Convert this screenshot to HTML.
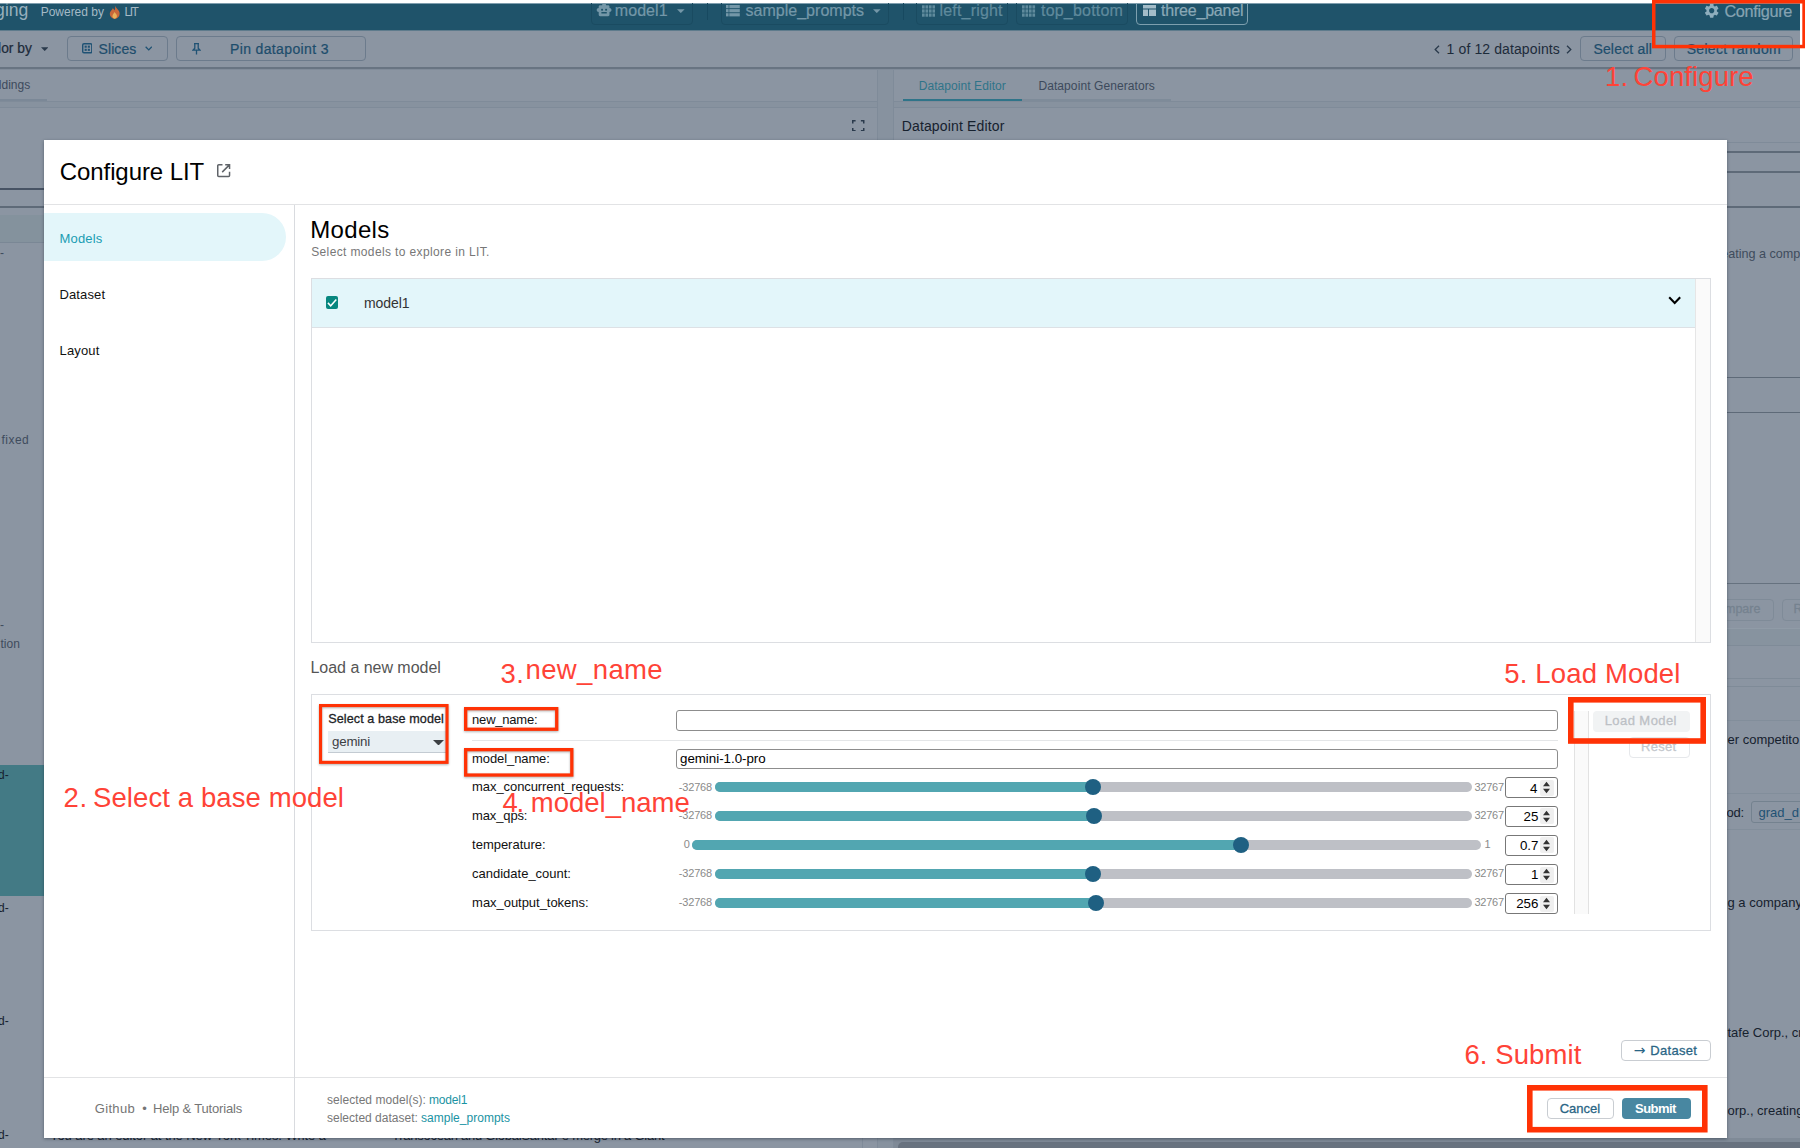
<!DOCTYPE html>
<html lang="en"><head><meta charset="utf-8"><title>Configure LIT</title>
<style>
html,body{margin:0;padding:0;background:#fff;}
body{width:1805px;height:1148px;overflow:hidden;position:relative;font-family:"Liberation Sans",sans-serif;}
#app{position:absolute;left:0;top:0;width:1800px;height:1148px;overflow:hidden;background:#8b95a2;}
#ann{position:absolute;left:0;top:0;width:1805px;height:1148px;overflow:hidden;}
.a{position:absolute;}
.t{position:absolute;white-space:pre;line-height:1;}
</style></head>
<body>
<div id="app">
<!-- background page (dimmed) -->
<div class="a" style="left:0.0px;top:3.0px;width:1800.0px;height:27.0px;background:#1f536a;"></div>
<div class="a" style="left:0.0px;top:3.0px;width:1800.0px;height:1.0px;background:#7f9eae;"></div>
<div class="a" style="left:0.0px;top:30.0px;width:1800.0px;height:1.0px;background:#5e7b8c;"></div>
<div class="a" style="left:591.0px;top:-4.0px;width:102.0px;height:29.3px;border:1px solid #1a4b61;border-radius:4px;box-sizing:border-box;"></div>
<div class="a" style="left:720.5px;top:-4.0px;width:168.5px;height:29.3px;border:1px solid #1a4b61;border-radius:4px;box-sizing:border-box;"></div>
<div class="a" style="left:916.3px;top:-4.0px;width:91.7px;height:29.3px;border:1px solid #1a4b61;border-radius:4px;box-sizing:border-box;"></div>
<div class="a" style="left:1016.0px;top:-4.0px;width:111.5px;height:29.3px;border:1px solid #1a4b61;border-radius:4px;box-sizing:border-box;"></div>
<div class="a" style="left:1136.0px;top:-4.0px;width:111.5px;height:29.3px;border:1px solid #7d9fae;border-radius:4px;box-sizing:border-box;"></div>
<div class="a" style="left:706.5px;top:3.0px;width:1.5px;height:17.0px;background:#174960;"></div>
<div class="a" style="left:902.5px;top:3.0px;width:1.5px;height:17.0px;background:#174960;"></div>
<svg class="a" style="left:595.6px;top:1.6px;" width="16.2" height="16.2" viewBox="0 0 24 24"><path fill="#7497a8" d="M20 9V7c0-1.1-.9-2-2-2h-3c0-1.66-1.34-3-3-3S9 3.340 9 5H6c-1.100 0-2 .9-2 2v2c-1.660 0-3 1.340-3 3s1.340 3 3 3v4c0 1.100.9 2 2 2h12c1.100 0 2-.9 2-2v-4c1.660 0 3-1.340 3-3s-1.340-3-3-3zM7.500 11.500c0-.83.67-1.500 1.500-1.500s1.500.67 1.500 1.500S9.830 13 9 13s-1.500-.67-1.500-1.500zM16 17H8v-2h8v2zm-1-4c-.83 0-1.500-.67-1.500-1.500S14.170 10 15 10s1.500.67 1.500 1.500S15.830 13 15 13z"/></svg>
<svg class="a" style="left:677.3px;top:8.5px;" width="7.6" height="4.4" viewBox="0 0 10 5"><path fill="#7497a8" d="M0 0h10L5 5z"/></svg>
<svg class="a" style="left:873.0px;top:8.5px;" width="7.6" height="4.4" viewBox="0 0 10 5"><path fill="#7497a8" d="M0 0h10L5 5z"/></svg>
<svg class="a" style="left:726.0px;top:5.2px;" width="13.8" height="11.4" viewBox="0 0 13.8 11.4"><g fill="#7497a8"><rect x="0" y="0" width="2.600" height="3.200"/><rect x="3.300" y="0" width="10.500" height="3.200"/><rect x="0" y="4.100" width="2.600" height="3.200"/><rect x="3.300" y="4.100" width="10.500" height="3.200"/><rect x="0" y="8.200" width="2.600" height="3.200"/><rect x="3.300" y="8.200" width="10.500" height="3.200"/></g></svg>
<svg class="a" style="left:921.6px;top:4.5px;" width="13.5" height="12" viewBox="0 0 13.2 11.2"><g fill="#5f8a9c"><rect x="0.0" y="0.0" width="2.6" height="3.2"/><rect x="0.0" y="4.0" width="2.6" height="3.2"/><rect x="0.0" y="8.0" width="2.6" height="3.2"/><rect x="3.4" y="0.0" width="2.6" height="3.2"/><rect x="3.4" y="4.0" width="2.6" height="3.2"/><rect x="3.4" y="8.0" width="2.6" height="3.2"/><rect x="6.8" y="0.0" width="2.6" height="3.2"/><rect x="6.8" y="4.0" width="2.6" height="3.2"/><rect x="6.8" y="8.0" width="2.6" height="3.2"/><rect x="10.2" y="0.0" width="2.6" height="3.2"/><rect x="10.2" y="4.0" width="2.6" height="3.2"/><rect x="10.2" y="8.0" width="2.6" height="3.2"/></g></svg>
<svg class="a" style="left:1022.0px;top:4.5px;" width="13.5" height="12" viewBox="0 0 13.2 11.2"><g fill="#5f8a9c"><rect x="0.0" y="0.0" width="2.6" height="3.2"/><rect x="0.0" y="4.0" width="2.6" height="3.2"/><rect x="0.0" y="8.0" width="2.6" height="3.2"/><rect x="3.4" y="0.0" width="2.6" height="3.2"/><rect x="3.4" y="4.0" width="2.6" height="3.2"/><rect x="3.4" y="8.0" width="2.6" height="3.2"/><rect x="6.8" y="0.0" width="2.6" height="3.2"/><rect x="6.8" y="4.0" width="2.6" height="3.2"/><rect x="6.8" y="8.0" width="2.6" height="3.2"/><rect x="10.2" y="0.0" width="2.6" height="3.2"/><rect x="10.2" y="4.0" width="2.6" height="3.2"/><rect x="10.2" y="8.0" width="2.6" height="3.2"/></g></svg>
<svg class="a" style="left:1142.6px;top:5.0px;" width="13" height="11" viewBox="0 0 13 11"><g fill="#a3bcc8"><rect x="0" y="0" width="13" height="3.5"/><rect x="0" y="4.5" width="5" height="6.500"/><rect x="6" y="4.5" width="7" height="6.500"/></g></svg>
<svg class="a" style="left:1703.1px;top:1.8px;" width="17.4" height="17.4" viewBox="0 0 24 24"><path fill="#8eaebd" d="M19.140 12.940c.04-.3.06-.61.06-.94 0-.32-.02-.64-.07-.94l2.030-1.580c.18-.14.23-.41.12-.61l-1.920-3.320c-.12-.22-.37-.29-.59-.22l-2.390.96c-.5-.38-1.030-.7-1.620-.94l-.36-2.540c-.04-.24-.24-.41-.48-.41h-3.840c-.24 0-.43.17-.47.41l-.36 2.540c-.59.24-1.130.57-1.620.94l-2.390-.96c-.22-.08-.47 0-.59.22L2.740 8.870c-.12.21-.08.47.12.61l2.030 1.580c-.05.3-.09.63-.09.94s.02.64.07.94l-2.030 1.580c-.18.14-.23.41-.12.61l1.920 3.320c.12.22.37.29.59.22l2.390-.96c.5.38 1.030.7 1.620.94l.36 2.540c.05.24.24.41.48.41h3.840c.24 0 .44-.17.47-.41l.36-2.540c.59-.24 1.130-.56 1.620-.94l2.390.96c.22.08.47 0 .59-.22l1.920-3.320c.12-.22.07-.47-.12-.61l-2.010-1.580zM12 15.600c-1.980 0-3.600-1.620-3.600-3.600s1.620-3.600 3.600-3.600 3.600 1.620 3.600 3.600-1.620 3.600-3.600 3.600z"/></svg>
<svg class="a" style="left:109.0px;top:4.5px;" width="11.5" height="14" viewBox="0 0 12 15"><path fill="#c9683a" d="M6 0c.5 2.500 3 4 4.500 6.500 1.700 3 .5 7.500-4.500 8.500-5-1-6.200-5-4.700-7.800C2.200 5.600 3.500 5 3.800 3.500 5 4.300 5.500 5.200 5.600 6 6.800 4.300 6.600 2 6 0z"/><path fill="#e9b15a" d="M6 14.600c-2.200-.5-3-2.400-2.200-4 .5-1 1.500-1.600 2-3 .9 1.400 2.200 2.300 2.500 3.800.3 1.700-.8 2.800-2.300 3.200z"/></svg>
<div class="a" style="left:0.0px;top:66.6px;width:1800.0px;height:1.0px;background:#7d8997;"></div>
<div class="a" style="left:0.0px;top:67.4px;width:1800.0px;height:1.6px;background:#687482;"></div>
<div class="a" style="left:0.0px;top:69.0px;width:1800.0px;height:1.0px;background:#818c9a;"></div>
<div class="a" style="left:67.0px;top:35.8px;width:100.8px;height:25.7px;border:1px solid #6c7b8c;border-radius:4px;box-sizing:border-box;"></div>
<div class="a" style="left:176.0px;top:35.8px;width:189.7px;height:25.7px;border:1px solid #6c7b8c;border-radius:4px;box-sizing:border-box;"></div>
<div class="a" style="left:1580.0px;top:35.8px;width:86.0px;height:25.7px;border:1px solid #6c7b8c;border-radius:4px;box-sizing:border-box;"></div>
<div class="a" style="left:1674.0px;top:35.8px;width:118.6px;height:25.7px;border:1px solid #6c7b8c;border-radius:4px;box-sizing:border-box;"></div>
<svg class="a" style="left:41.1px;top:46.5px;" width="7.4" height="4.4" viewBox="0 0 10 5"><path fill="#2a3a4c" d="M0 0h10L5 5z"/></svg>
<svg class="a" style="left:81.8px;top:43.0px;" width="10.5" height="10.5" viewBox="0 0 12 12"><rect x="0.800" y="0.800" width="10.400" height="10.400" rx="1.500" fill="none" stroke="#1f5274" stroke-width="1.600"/><g fill="#1f5274"><rect x="3" y="3" width="2.400" height="2.400"/><rect x="6.600" y="3" width="2.400" height="2.400"/><rect x="3" y="6.600" width="2.400" height="2.400"/><rect x="6.600" y="6.600" width="2.400" height="2.400"/></g></svg>
<svg class="a" style="left:144.5px;top:46.3px;" width="7.5" height="5" viewBox="0 0 8 5"><path fill="none" stroke="#1f5274" stroke-width="1.400" d="M.7.7 4 4 7.300.7"/></svg>
<svg class="a" style="left:191.5px;top:42.5px;" width="9" height="12" viewBox="0 0 9 12"><path fill="none" stroke="#1f5274" stroke-width="1.300" d="M2 .7h5M2.800.7v4.500L1 7.200h7L6.200 5.200V.7M4.500 7.200V11.500"/></svg>
<svg class="a" style="left:1433.5px;top:44.5px;" width="6" height="9" viewBox="0 0 6 9"><path fill="none" stroke="#2a3a4c" stroke-width="1.300" d="M5 .7 1.200 4.500 5 8.300"/></svg>
<svg class="a" style="left:1565.5px;top:44.5px;" width="6" height="9" viewBox="0 0 6 9"><path fill="none" stroke="#2a3a4c" stroke-width="1.300" d="M1 .7 4.800 4.500 1 8.300"/></svg>
<div class="a" style="left:0.0px;top:100.8px;width:1800.0px;height:7.5px;background:#87929f;border-top:1px solid #7f8b99;border-bottom:1px solid #7f8b99;box-sizing:border-box;"></div>
<div class="a" style="left:877.0px;top:69.5px;width:17.0px;height:1078.5px;background:#87929f;border-left:1px solid #7f8b99;border-right:1px solid #7f8b99;box-sizing:border-box;"></div>
<div class="a" style="left:0.0px;top:98.6px;width:47.0px;height:2.0px;background:#7b8897;"></div>
<div class="a" style="left:903.0px;top:98.5px;width:119.0px;height:2.2px;background:#2f7489;"></div>
<div class="a" style="left:1022.0px;top:98.5px;width:149.0px;height:2.2px;background:#7e8b99;"></div>
<svg class="a" style="left:852.0px;top:119.8px;" width="12.5" height="11.6" viewBox="0 0 12.5 11.6"><path fill="none" stroke="#2a3a4c" stroke-width="1.500" d="M.75 3.600V.75H3.600M8.900.75h2.850V3.600M11.750 8v2.850H8.900M3.600 10.850H.75V8"/></svg>
<div class="a" style="left:0.0px;top:188.0px;width:877.0px;height:2.0px;background:#475364;"></div>
<div class="a" style="left:0.0px;top:206.2px;width:877.0px;height:1.8px;background:#5e6a78;"></div>
<div class="a" style="left:0.0px;top:215.0px;width:877.0px;height:27.6px;background:#84929d;border-bottom:1px solid #7a8795;box-sizing:border-box;"></div>
<div class="a" style="left:0.0px;top:765.0px;width:877.0px;height:131.4px;background:#437a85;"></div>
<div class="a" style="left:894.0px;top:142.0px;width:906.0px;height:1.0px;background:#7f8b99;"></div>
<div class="a" style="left:894.0px;top:151.4px;width:906.0px;height:1.7px;background:#5e6a78;"></div>
<div class="a" style="left:894.0px;top:171.0px;width:906.0px;height:1.7px;background:#5e6a78;"></div>
<div class="a" style="left:894.0px;top:206.0px;width:906.0px;height:1.7px;background:#5e6a78;"></div>
<div class="a" style="left:894.0px;top:376.6px;width:906.0px;height:1.7px;background:#5e6a78;"></div>
<div class="a" style="left:894.0px;top:411.8px;width:906.0px;height:1.7px;background:#5e6a78;"></div>
<div class="a" style="left:894.0px;top:582.8px;width:906.0px;height:1.6px;background:#66727f;"></div>
<div class="a" style="left:1690.0px;top:599.0px;width:83.7px;height:21.6px;border:1px solid #7f8b98;border-radius:4px;box-sizing:border-box;"></div>
<div class="a" style="left:1782.0px;top:599.0px;width:78.0px;height:21.6px;border:1px solid #7f8b98;border-radius:4px;box-sizing:border-box;"></div>
<div class="a" style="left:894.0px;top:628.0px;width:906.0px;height:18.0px;background:#87939f;border-top:1px solid #909ba7;border-bottom:1px solid #7f8b98;box-sizing:border-box;"></div>
<div class="a" style="left:894.0px;top:678.2px;width:906.0px;height:1.0px;background:#7f8b98;"></div>
<div class="a" style="left:894.0px;top:685.6px;width:906.0px;height:1.0px;background:#7f8b98;"></div>
<div class="a" style="left:894.0px;top:719.6px;width:906.0px;height:1.0px;background:#828e9b;"></div>
<div class="a" style="left:894.0px;top:793.2px;width:906.0px;height:1.0px;background:#828e9b;"></div>
<div class="a" style="left:894.0px;top:828.6px;width:906.0px;height:1.0px;background:#828e9b;"></div>
<div class="a" style="left:1751.0px;top:801.0px;width:79.0px;height:21.7px;border:1px solid #74828f;border-radius:3px;box-sizing:border-box;"></div>
<div class="a" style="left:862.0px;top:1120.0px;width:1.0px;height:28.0px;background:#7f8b99;"></div>
<div class="a" style="left:894.0px;top:1138.0px;width:906.0px;height:10.0px;background:#7f8a97;"></div>
<div class="a" style="left:898.0px;top:1142.0px;width:912.0px;height:14.0px;background:#68727f;border-radius:5px;"></div>
<span class="t" style="left:-4.9px;top:2.1px;font-size:17.6px;color:#98b0bd;">ging</span>
<span class="t" style="left:40.7px;top:6.4px;font-size:12px;color:#a5bac6;letter-spacing:-0.02px;">Powered by</span>
<span class="t" style="left:124.6px;top:6.4px;font-size:12px;color:#a5bac6;letter-spacing:-1.50px;">LIT</span>
<span class="t" style="left:614.8px;top:3.3px;font-size:16px;color:#7497a8;letter-spacing:0.06px;-webkit-text-stroke:0.22px;">model1</span>
<span class="t" style="left:745.5px;top:3.3px;font-size:16px;color:#7497a8;letter-spacing:0.02px;-webkit-text-stroke:0.22px;">sample_prompts</span>
<span class="t" style="left:939.5px;top:3.3px;font-size:16px;color:#5f8a9c;letter-spacing:0.18px;-webkit-text-stroke:0.22px;">left_right</span>
<span class="t" style="left:1041.0px;top:3.3px;font-size:16px;color:#5f8a9c;letter-spacing:0.21px;-webkit-text-stroke:0.22px;">top_bottom</span>
<span class="t" style="left:1161.0px;top:3.3px;font-size:16px;color:#8aa8b6;letter-spacing:-0.20px;-webkit-text-stroke:0.22px;">three_panel</span>
<span class="t" style="left:1724.4px;top:3.1px;font-size:16.3px;color:#86a3b2;letter-spacing:-0.33px;-webkit-text-stroke:0.22px;">Configure</span>
<span class="t" style="left:-1.9px;top:41.7px;font-size:13.8px;color:#1d2b3a;-webkit-text-stroke:0.22px;">lor by</span>
<span class="t" style="left:98.6px;top:42.0px;font-size:14px;color:#1d4d6c;letter-spacing:0.07px;-webkit-text-stroke:0.22px;">Slices</span>
<span class="t" style="left:230.0px;top:42.0px;font-size:14px;color:#1d4d6c;letter-spacing:0.36px;-webkit-text-stroke:0.22px;">Pin datapoint 3</span>
<span class="t" style="left:1446.6px;top:41.7px;font-size:14px;color:#1d2b3a;letter-spacing:0.11px;">1 of 12 datapoints</span>
<span class="t" style="left:1593.4px;top:42.0px;font-size:14px;color:#1d4d6c;letter-spacing:0.18px;-webkit-text-stroke:0.22px;">Select all</span>
<span class="t" style="left:1686.7px;top:42.0px;font-size:14px;color:#1d4d6c;letter-spacing:0.31px;-webkit-text-stroke:0.22px;">Select random</span>
<span class="t" style="left:-1.2px;top:79.4px;font-size:12px;color:#3d4a5c;">ldings</span>
<span class="t" style="left:918.7px;top:79.9px;font-size:12px;color:#2f7489;letter-spacing:0.07px;">Datapoint Editor</span>
<span class="t" style="left:1038.4px;top:79.9px;font-size:12px;color:#3d4a5c;letter-spacing:0.09px;">Datapoint Generators</span>
<span class="t" style="left:901.7px;top:118.7px;font-size:14px;color:#16212e;letter-spacing:0.15px;">Datapoint Editor</span>
<span class="t" style="left:1.5px;top:434.1px;font-size:12px;color:#3f4c5d;letter-spacing:0.46px;">fixed</span>
<span class="t" style="left:0.0px;top:247.3px;font-size:12px;color:#3f4c5d;">-</span>
<span class="t" style="left:0.0px;top:619.3px;font-size:12px;color:#3f4c5d;">-</span>
<span class="t" style="left:0.5px;top:637.6px;font-size:12px;color:#3f4c5d;">tion</span>
<span class="t" style="left:-2.0px;top:769.3px;font-size:12px;color:#16212e;">d-</span>
<span class="t" style="left:-2.0px;top:902.3px;font-size:12px;color:#16212e;">d-</span>
<span class="t" style="left:-2.0px;top:1015.3px;font-size:12px;color:#16212e;">d-</span>
<span class="t" style="left:-2.0px;top:1129.1px;font-size:12px;color:#16212e;">d-</span>
<span class="t" style="left:1721.2px;top:247.7px;font-size:12.6px;color:#3f4c5d;">eating a comp</span>
<span class="t" style="left:1727.6px;top:732.6px;font-size:13px;color:#16212e;">er competito</span>
<span class="t" style="left:1726.5px;top:806.3px;font-size:13px;color:#16212e;letter-spacing:-0.23px;">od:</span>
<span class="t" style="left:1758.5px;top:806.3px;font-size:13px;color:#1f5274;">grad_d</span>
<span class="t" style="left:1727.5px;top:895.5px;font-size:13px;color:#16212e;">g a company</span>
<span class="t" style="left:1727.5px;top:1025.6px;font-size:13px;color:#16212e;">tafe Corp., cr</span>
<span class="t" style="left:1727.5px;top:1103.6px;font-size:13px;color:#16212e;">orp., creating</span>
<span class="t" style="left:1725.0px;top:603.4px;font-size:12.5px;color:#75828f;-webkit-text-stroke:0.28px;">mpare</span>
<span class="t" style="left:1793.5px;top:603.4px;font-size:12.5px;color:#75828f;-webkit-text-stroke:0.28px;">R</span>
<span class="t" style="left:50.0px;top:1128.9px;font-size:13px;color:#16212e;letter-spacing:-0.08px;">You are an editor at the New York Times. Write a</span>
<span class="t" style="left:392.0px;top:1128.9px;font-size:13px;color:#16212e;letter-spacing:-0.25px;">Transocean and GlobalSantaFe merge in a Giant</span>
<!-- dialog -->
<div class="a" style="left:44.2px;top:140.4px;width:1682.8px;height:997.9px;background:#fff;box-shadow:0 1px 3px rgba(20,30,45,.45);"></div>
<div class="a" style="left:44.2px;top:204.3px;width:1682.8px;height:1.0px;background:#e2e3e5;"></div>
<div class="a" style="left:44.2px;top:1077.4px;width:1682.8px;height:1.0px;background:#e2e3e5;"></div>
<div class="a" style="left:293.8px;top:205.0px;width:1.0px;height:933.3px;background:#d9dbdf;"></div>
<div class="a" style="left:44.2px;top:213.4px;width:241.8px;height:47.9px;background:#e3f6fa;border-radius:0 24px 24px 0;"></div>
<svg class="a" style="left:215.7px;top:163.0px;" width="15.3" height="15.3" viewBox="0 0 15.3 15.3"><path fill="none" stroke="#5f6368" stroke-width="1.500" d="M6.500 1.750H2.750a1 1 0 0 0-1 1v9.800a1 1 0 0 0 1 1h9.800a1 1 0 0 0 1-1V8.800M9.200 1.750h4.350V6.100M13.400 1.900 6.200 9.100"/></svg>
<div class="a" style="left:311.3px;top:277.7px;width:1399.3px;height:365.3px;border:1px solid #dcdee2;box-sizing:border-box;"></div>
<div class="a" style="left:1695.3px;top:278.7px;width:14.3px;height:363.3px;background:#fafafa;border-left:1px solid #e6e6e6;box-sizing:border-box;"></div>
<div class="a" style="left:312.3px;top:278.7px;width:1383.0px;height:49.5px;background:#e3f6fa;border-bottom:1px solid #dde1e5;box-sizing:border-box;"></div>
<div class="a" style="left:325.7px;top:296.0px;width:12.6px;height:12.9px;background:#07877f;border-radius:2px;"></div>
<svg class="a" style="left:325.7px;top:296.0px;" width="12.6" height="12.9" viewBox="0 0 12.6 12.9"><path fill="none" stroke="#fff" stroke-width="1.500" d="M1.900 6.900 4.700 9.800 10.300 3.600"/></svg>
<svg class="a" style="left:1668.0px;top:296.0px;" width="13.4" height="9.5" viewBox="0 0 13.4 9.5"><path fill="none" stroke="#000" stroke-width="2.100" d="M1.200 1.300 6.700 7 12.200 1.300"/></svg>
<div class="a" style="left:311.3px;top:693.7px;width:1399.5px;height:237.3px;border:1px solid #dcdee2;box-sizing:border-box;"></div>
<div class="a" style="left:328.0px;top:730.8px;width:118.0px;height:22.0px;background:#e8eff3;border-bottom:1px solid #c3cbd2;box-sizing:border-box;"></div>
<svg class="a" style="left:433.0px;top:739.5px;" width="11" height="5.5" viewBox="0 0 11 5.5"><path fill="#3c4043" d="M0 0h11L5.500 5.500z"/></svg>
<div class="a" style="left:676.0px;top:710.4px;width:881.8px;height:20.9px;border:1px solid #8d8d8d;border-radius:3px;box-sizing:border-box;background:#fff;"></div>
<div class="a" style="left:676.0px;top:748.6px;width:881.8px;height:20.8px;border:1px solid #8d8d8d;border-radius:3px;box-sizing:border-box;background:#fff;"></div>
<div class="a" style="left:472.0px;top:739.6px;width:1085.8px;height:1.0px;background:#e4e6e8;"></div>
<div class="a" style="left:714.8px;top:782.3px;width:756.8px;height:10.0px;background:#bec0c6;border-radius:5px;"></div>
<div class="a" style="left:714.8px;top:782.3px;width:380.2px;height:10.0px;background:#52a6b1;border-radius:5px;"></div>
<div class="a" style="left:1085.0px;top:779.4px;width:16.0px;height:16.0px;background:#1f6082;border-radius:50%;"></div>
<div class="a" style="left:1505.3px;top:777.4px;width:52.4px;height:20.8px;border:1px solid #777;border-radius:3px;box-sizing:border-box;background:#fff;"></div>
<div class="a" style="left:1539.5px;top:779.8px;width:14.0px;height:16.0px;background:#efefef;border-radius:2px;"></div>
<svg class="a" style="left:1543.0px;top:781.3px;" width="7" height="13" viewBox="0 0 7 13"><path fill="#333" d="M0 5.200h7L3.500.800zM0 7.800h7L3.500 12.200z"/></svg>
<div class="a" style="left:714.8px;top:810.8px;width:756.8px;height:10.0px;background:#bec0c6;border-radius:5px;"></div>
<div class="a" style="left:714.8px;top:810.8px;width:380.7px;height:10.0px;background:#52a6b1;border-radius:5px;"></div>
<div class="a" style="left:1085.5px;top:807.9px;width:16.0px;height:16.0px;background:#1f6082;border-radius:50%;"></div>
<div class="a" style="left:1505.3px;top:805.9px;width:52.4px;height:20.8px;border:1px solid #777;border-radius:3px;box-sizing:border-box;background:#fff;"></div>
<div class="a" style="left:1539.5px;top:808.3px;width:14.0px;height:16.0px;background:#efefef;border-radius:2px;"></div>
<svg class="a" style="left:1543.0px;top:809.8px;" width="7" height="13" viewBox="0 0 7 13"><path fill="#333" d="M0 5.200h7L3.500.800zM0 7.800h7L3.500 12.200z"/></svg>
<div class="a" style="left:691.9px;top:839.9px;width:788.9px;height:10.0px;background:#bec0c6;border-radius:5px;"></div>
<div class="a" style="left:691.9px;top:839.9px;width:551.0px;height:10.0px;background:#52a6b1;border-radius:5px;"></div>
<div class="a" style="left:1232.9px;top:837.0px;width:16.0px;height:16.0px;background:#1f6082;border-radius:50%;"></div>
<div class="a" style="left:1505.3px;top:835.0px;width:52.4px;height:20.8px;border:1px solid #777;border-radius:3px;box-sizing:border-box;background:#fff;"></div>
<div class="a" style="left:1539.5px;top:837.4px;width:14.0px;height:16.0px;background:#efefef;border-radius:2px;"></div>
<svg class="a" style="left:1543.0px;top:838.9px;" width="7" height="13" viewBox="0 0 7 13"><path fill="#333" d="M0 5.200h7L3.500.800zM0 7.800h7L3.500 12.200z"/></svg>
<div class="a" style="left:714.8px;top:869.0px;width:756.8px;height:10.0px;background:#bec0c6;border-radius:5px;"></div>
<div class="a" style="left:714.8px;top:869.0px;width:379.9px;height:10.0px;background:#52a6b1;border-radius:5px;"></div>
<div class="a" style="left:1084.7px;top:866.1px;width:16.0px;height:16.0px;background:#1f6082;border-radius:50%;"></div>
<div class="a" style="left:1505.3px;top:864.1px;width:52.4px;height:20.8px;border:1px solid #777;border-radius:3px;box-sizing:border-box;background:#fff;"></div>
<div class="a" style="left:1539.5px;top:866.5px;width:14.0px;height:16.0px;background:#efefef;border-radius:2px;"></div>
<svg class="a" style="left:1543.0px;top:868.0px;" width="7" height="13" viewBox="0 0 7 13"><path fill="#333" d="M0 5.200h7L3.500.800zM0 7.800h7L3.500 12.200z"/></svg>
<div class="a" style="left:714.8px;top:898.0px;width:756.8px;height:10.0px;background:#bec0c6;border-radius:5px;"></div>
<div class="a" style="left:714.8px;top:898.0px;width:382.9px;height:10.0px;background:#52a6b1;border-radius:5px;"></div>
<div class="a" style="left:1087.7px;top:895.1px;width:16.0px;height:16.0px;background:#1f6082;border-radius:50%;"></div>
<div class="a" style="left:1505.3px;top:893.1px;width:52.4px;height:20.8px;border:1px solid #777;border-radius:3px;box-sizing:border-box;background:#fff;"></div>
<div class="a" style="left:1539.5px;top:895.5px;width:14.0px;height:16.0px;background:#efefef;border-radius:2px;"></div>
<svg class="a" style="left:1543.0px;top:897.0px;" width="7" height="13" viewBox="0 0 7 13"><path fill="#333" d="M0 5.200h7L3.500.800zM0 7.800h7L3.500 12.200z"/></svg>
<div class="a" style="left:1574.0px;top:710.6px;width:15.0px;height:203.9px;background:#fafafa;border-left:1px solid #e2e2e2;border-right:1px solid #e2e2e2;box-sizing:border-box;"></div>
<div class="a" style="left:1593.0px;top:710.6px;width:96.8px;height:21.5px;background:#f1f3f4;border-radius:4px;"></div>
<div class="a" style="left:1629.0px;top:736.6px;width:60.8px;height:21.6px;border:1px solid #e6e8eb;border-radius:4px;box-sizing:border-box;"></div>
<div class="a" style="left:1621.0px;top:1039.7px;width:89.8px;height:21.7px;border:1px solid #c9cdd2;border-radius:4px;box-sizing:border-box;"></div>
<div class="a" style="left:1547.0px;top:1097.6px;width:66.7px;height:21.9px;border:1px solid #c9cdd2;border-radius:4px;box-sizing:border-box;"></div>
<div class="a" style="left:1622.0px;top:1097.6px;width:69.0px;height:21.9px;background:#4887a1;border-radius:4px;"></div>
<span class="t" style="left:59.8px;top:159.9px;font-size:24px;color:#000;letter-spacing:-0.09px;">Configure LIT</span>
<span class="t" style="left:59.5px;top:231.6px;font-size:13px;color:#1a9db3;letter-spacing:0.18px;">Models</span>
<span class="t" style="left:59.5px;top:287.6px;font-size:13px;color:#111;letter-spacing:0.12px;">Dataset</span>
<span class="t" style="left:59.5px;top:343.6px;font-size:13px;color:#111;letter-spacing:0.16px;">Layout</span>
<span class="t" style="left:310.3px;top:217.9px;font-size:24px;color:#000;letter-spacing:0.31px;">Models</span>
<span class="t" style="left:311.2px;top:246.3px;font-size:12px;color:#777;letter-spacing:0.37px;">Select models to explore in LIT.</span>
<span class="t" style="left:364.0px;top:296.1px;font-size:14px;color:#333;letter-spacing:-0.09px;">model1</span>
<span class="t" style="left:310.5px;top:660.2px;font-size:16px;color:#555;letter-spacing:-0.03px;">Load a new model</span>
<span class="t" style="left:328.2px;top:712.8px;font-size:12.6px;color:#202124;letter-spacing:0.09px;-webkit-text-stroke:0.28px;">Select a base model</span>
<span class="t" style="left:332.0px;top:734.7px;font-size:13.3px;color:#3c4043;letter-spacing:-0.18px;">gemini</span>
<span class="t" style="left:472.1px;top:713.4px;font-size:13px;color:#111;letter-spacing:-0.21px;">new_name:</span>
<span class="t" style="left:472.1px;top:751.5px;font-size:13px;color:#111;letter-spacing:-0.10px;">model_name:</span>
<span class="t" style="left:472.1px;top:780.3px;font-size:13px;color:#111;letter-spacing:-0.08px;">max_concurrent_requests:</span>
<span class="t" style="left:472.1px;top:809.0px;font-size:13px;color:#111;letter-spacing:-0.14px;">max_qps:</span>
<span class="t" style="left:472.1px;top:838.0px;font-size:13px;color:#111;letter-spacing:-0.02px;">temperature:</span>
<span class="t" style="left:472.1px;top:867.0px;font-size:13px;color:#111;letter-spacing:-0.01px;">candidate_count:</span>
<span class="t" style="left:472.1px;top:896.0px;font-size:13px;color:#111;letter-spacing:-0.04px;">max_output_tokens:</span>
<span class="t" style="left:678.8px;top:781.6px;font-size:11px;color:#8a8a8a;letter-spacing:-0.19px;">-32768</span>
<span class="t" style="left:1474.4px;top:781.6px;font-size:11px;color:#8a8a8a;letter-spacing:-0.22px;">32767</span>
<span class="t" style="left:678.8px;top:810.3px;font-size:11px;color:#8a8a8a;letter-spacing:-0.19px;">-32768</span>
<span class="t" style="left:1474.4px;top:810.3px;font-size:11px;color:#8a8a8a;letter-spacing:-0.22px;">32767</span>
<span class="t" style="left:678.8px;top:868.3px;font-size:11px;color:#8a8a8a;letter-spacing:-0.19px;">-32768</span>
<span class="t" style="left:1474.4px;top:868.3px;font-size:11px;color:#8a8a8a;letter-spacing:-0.22px;">32767</span>
<span class="t" style="left:678.8px;top:897.3px;font-size:11px;color:#8a8a8a;letter-spacing:-0.19px;">-32768</span>
<span class="t" style="left:1474.4px;top:897.3px;font-size:11px;color:#8a8a8a;letter-spacing:-0.22px;">32767</span>
<span class="t" style="left:683.8px;top:839.3px;font-size:11px;color:#8a8a8a;">0</span>
<span class="t" style="left:1484.6px;top:839.3px;font-size:11px;color:#8a8a8a;">1</span>
<span class="t" style="left:680.0px;top:752.2px;font-size:13.33px;color:#000;letter-spacing:-0.02px;">gemini-1.0-pro</span>
<span class="t" style="left:1530.0px;top:781.5px;font-size:13.33px;color:#000;">4</span>
<span class="t" style="left:1523.6px;top:810.3px;font-size:13.33px;color:#000;">25</span>
<span class="t" style="left:1519.9px;top:839.3px;font-size:13.33px;color:#000;">0.7</span>
<span class="t" style="left:1531.0px;top:868.3px;font-size:13.33px;color:#000;">1</span>
<span class="t" style="left:1516.2px;top:897.3px;font-size:13.33px;color:#000;">256</span>
<span class="t" style="left:1604.7px;top:714.1px;font-size:13px;color:#bcc0c5;letter-spacing:0.43px;-webkit-text-stroke:0.28px;">Load Model</span>
<span class="t" style="left:1641.0px;top:740.1px;font-size:13px;color:#c3c7cc;letter-spacing:0.31px;-webkit-text-stroke:0.28px;">Reset</span>
<span class="t" style="left:1633.8px;top:1043.4px;font-size:14px;color:#2a6585;font-family:'DejaVu Sans',sans-serif;">→</span>
<span class="t" style="left:1650.3px;top:1043.9px;font-size:13px;color:#2a6585;letter-spacing:0.30px;-webkit-text-stroke:0.28px;">Dataset</span>
<span class="t" style="left:1559.7px;top:1101.9px;font-size:13px;color:#2a6585;letter-spacing:0.02px;-webkit-text-stroke:0.28px;">Cancel</span>
<span class="t" style="left:1635.0px;top:1101.9px;font-size:13px;color:#fff;letter-spacing:-0.54px;font-weight:700;">Submit</span>
<span class="t" style="left:94.7px;top:1101.6px;font-size:13px;color:#757575;letter-spacing:0.35px;">Github</span>
<span class="t" style="left:142.3px;top:1101.6px;font-size:13px;color:#757575;">•</span>
<span class="t" style="left:153.0px;top:1101.6px;font-size:13px;color:#757575;letter-spacing:-0.17px;">Help &amp; Tutorials</span>
<span class="t" style="left:327.0px;top:1093.6px;font-size:12px;color:#777;letter-spacing:0.05px;">selected model(s):</span>
<span class="t" style="left:429.0px;top:1093.6px;font-size:12px;color:#1a93a3;letter-spacing:-0.18px;">model1</span>
<span class="t" style="left:327.0px;top:1111.7px;font-size:12px;color:#777;letter-spacing:0.01px;">selected dataset:</span>
<span class="t" style="left:421.0px;top:1111.7px;font-size:12px;color:#1a93a3;letter-spacing:0.02px;">sample_prompts</span>
</div>
<div id="ann">
<div class="a" style="left:0.0px;top:0.0px;width:1800.0px;height:3.0px;background:#fff;"></div>
<svg class="a" style="left:1652.2px;top:-0.4px;overflow:visible;" width="153.8" height="48.3" viewBox="0 0 153.8 48.3"><rect x="1.75" y="1.75" width="150.30" height="44.80" fill="none" stroke="#ff3205" stroke-width="3.5"/></svg>
<svg class="a" style="left:318.9px;top:703.9px;overflow:visible;filter:drop-shadow(0 1px 1.2px rgba(0,0,0,.3));" width="129.6" height="59.9" viewBox="0 0 129.6 59.9"><rect x="1.55" y="1.55" width="126.50" height="56.80" fill="none" stroke="#ff3205" stroke-width="3.1"/></svg>
<svg class="a" style="left:464.3px;top:707.0px;overflow:visible;filter:drop-shadow(0 1px 1.2px rgba(0,0,0,.3));" width="94.4" height="23.9" viewBox="0 0 94.4 23.9"><rect x="1.65" y="1.65" width="91.10" height="20.60" fill="none" stroke="#ff3205" stroke-width="3.3"/></svg>
<svg class="a" style="left:464.3px;top:748.1px;overflow:visible;filter:drop-shadow(0 1px 1.2px rgba(0,0,0,.3));" width="109.5" height="28.7" viewBox="0 0 109.5 28.7"><rect x="1.65" y="1.65" width="106.20" height="25.40" fill="none" stroke="#ff3205" stroke-width="3.3"/></svg>
<svg class="a" style="left:1568.0px;top:697.0px;overflow:visible;" width="138.0" height="46.8" viewBox="0 0 138.0 46.8"><rect x="2.80" y="2.80" width="132.40" height="41.20" fill="none" stroke="#ff3205" stroke-width="5.6"/></svg>
<svg class="a" style="left:1527.2px;top:1085.3px;overflow:visible;" width="180.6" height="47.5" viewBox="0 0 180.6 47.5"><rect x="2.80" y="2.80" width="175.00" height="41.90" fill="none" stroke="#ff3205" stroke-width="5.6"/></svg>
<span class="t" style="left:1605.0px;top:62.8px;font-size:27.5px;color:#ff4337;letter-spacing:0.21px;">1.</span>
<span class="t" style="left:1633.6px;top:62.8px;font-size:27.5px;color:#ff4337;letter-spacing:0.09px;">Configure</span>
<span class="t" style="left:63.6px;top:783.6px;font-size:27.5px;color:#ff4337;letter-spacing:0.71px;">2.</span>
<span class="t" style="left:93.0px;top:783.6px;font-size:27.5px;color:#ff4337;letter-spacing:0.10px;">Select a base model</span>
<span class="t" style="left:500.4px;top:659.6px;font-size:27.5px;color:#ff4337;letter-spacing:0.61px;">3.</span>
<span class="t" style="left:525.5px;top:656.2px;font-size:27.5px;color:#ff4337;letter-spacing:0.37px;">new_name</span>
<span class="t" style="left:502.6px;top:788.6px;font-size:27.5px;color:#ff4337;letter-spacing:-1.29px;">4.</span>
<span class="t" style="left:530.8px;top:788.6px;font-size:27.5px;color:#ff4337;">model_name</span>
<span class="t" style="left:1504.3px;top:659.6px;font-size:27.5px;color:#ff4337;letter-spacing:0.15px;">5. Load Model</span>
<span class="t" style="left:1464.5px;top:1040.7px;font-size:27.5px;color:#ff4337;letter-spacing:0.08px;">6. Submit</span>
</div>
</body></html>
